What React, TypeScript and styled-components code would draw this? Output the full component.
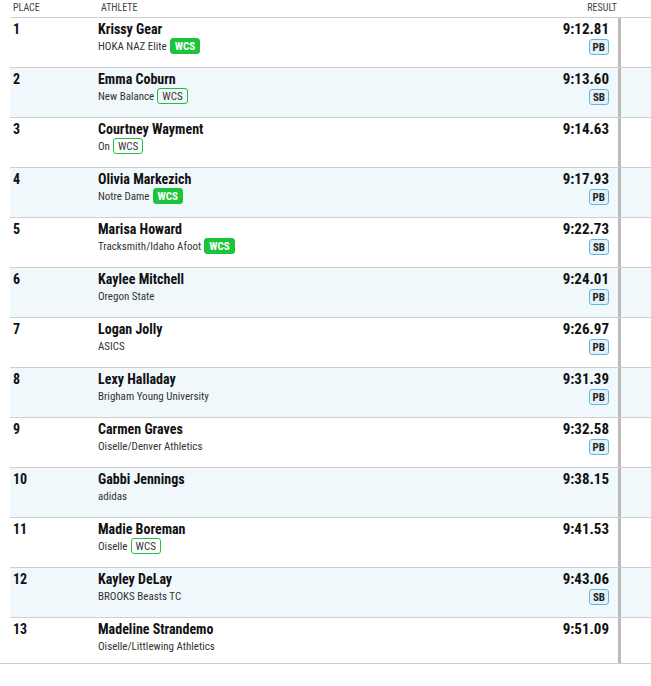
import React from 'react';
import styled, { createGlobalStyle } from 'styled-components';

const GlobalStyle = createGlobalStyle`
  html, body {
    margin: 0;
    padding: 0;
    background: #ffffff;
  }
  body {
    font-family: Roboto, "Noto Sans", sans-serif;
    font-stretch: 80%;
    color: #111;
  }
`;

type Mark = 'PB' | 'SB' | null;
type Wcs = 'solid' | 'outline' | null;

interface ResultRow {
  place: number;
  name: string;
  team: string;
  wcs: Wcs;
  time: string;
  mark: Mark;
}

const results: ResultRow[] = [
  { place: 1, name: 'Krissy Gear', team: 'HOKA NAZ Elite', wcs: 'solid', time: '9:12.81', mark: 'PB' },
  { place: 2, name: 'Emma Coburn', team: 'New Balance', wcs: 'outline', time: '9:13.60', mark: 'SB' },
  { place: 3, name: 'Courtney Wayment', team: 'On', wcs: 'outline', time: '9:14.63', mark: null },
  { place: 4, name: 'Olivia Markezich', team: 'Notre Dame', wcs: 'solid', time: '9:17.93', mark: 'PB' },
  { place: 5, name: 'Marisa Howard', team: 'Tracksmith/Idaho Afoot', wcs: 'solid', time: '9:22.73', mark: 'SB' },
  { place: 6, name: 'Kaylee Mitchell', team: 'Oregon State', wcs: null, time: '9:24.01', mark: 'PB' },
  { place: 7, name: 'Logan Jolly', team: 'ASICS', wcs: null, time: '9:26.97', mark: 'PB' },
  { place: 8, name: 'Lexy Halladay', team: 'Brigham Young University', wcs: null, time: '9:31.39', mark: 'PB' },
  { place: 9, name: 'Carmen Graves', team: 'Oiselle/Denver Athletics', wcs: null, time: '9:32.58', mark: 'PB' },
  { place: 10, name: 'Gabbi Jennings', team: 'adidas', wcs: null, time: '9:38.15', mark: null },
  { place: 11, name: 'Madie Boreman', team: 'Oiselle', wcs: 'outline', time: '9:41.53', mark: null },
  { place: 12, name: 'Kayley DeLay', team: 'BROOKS Beasts TC', wcs: null, time: '9:43.06', mark: 'SB' },
  { place: 13, name: 'Madeline Strandemo', team: 'Oiselle/Littlewing Athletics', wcs: null, time: '9:51.09', mark: null },
];

const Wrapper = styled.div`
  width: 651px;
  border-bottom: 1px solid #cfcfcf;
`;

const Table = styled.div`
  margin-left: 10px;
  display: flex;
  flex-direction: column;
`;

const HeaderRow = styled.div`
  display: grid;
  grid-template-columns: 88px 1fr 100px 33px;
  height: 17px;
  border-bottom: 1px solid #cfcfcf;
  font-size: 10px;
  line-height: 15px;
  color: #444;
  text-transform: uppercase;
`;

const HeaderCell = styled.div<{ $right?: boolean }>`
  padding-left: ${p => (p.$right ? '0' : '3px')};
  padding-right: ${p => (p.$right ? '1px' : '0')};
  text-align: ${p => (p.$right ? 'right' : 'left')};
`;

const Row = styled.div<{ $shaded: boolean }>`
  display: grid;
  grid-template-columns: 88px 1fr 100px 3px 30px;
  height: 49px;
  background: ${p => (p.$shaded ? '#f0f8fc' : '#ffffff')};
  border-bottom: 1px solid #cfcfcf;

  &:last-child {
    height: 45px;
    border-bottom: none;
  }
`;

const Place = styled.div`
  padding: 2px 0 0 3px;
  font-size: 14px;
  line-height: 18px;
  font-weight: 700;
`;

const Athlete = styled.div`
  padding-top: 2px;
  display: flex;
  flex-direction: column;
`;

const Name = styled.div`
  font-size: 14px;
  line-height: 18px;
  font-weight: 700;
  color: #111;
`;

const Team = styled.div`
  display: flex;
  align-items: center;
  gap: 3px;
  height: 16px;
  font-size: 11px;
  color: #333;
`;

const WcsBadge = styled.span<{ $solid: boolean }>`
  display: inline-flex;
  align-items: center;
  height: 14px;
  padding: 0 4px;
  border-radius: 3px;
  font-size: 11px;
  font-weight: ${p => (p.$solid ? 700 : 400)};
  color: ${p => (p.$solid ? '#ffffff' : '#333')};
  background: ${p => (p.$solid ? '#1cc43c' : 'transparent')};
  border: 1px solid #1cc43c;
`;

const Result = styled.div`
  padding: 2px 9px 0 0;
  display: flex;
  flex-direction: column;
  align-items: flex-end;
  gap: 1px;
`;

const Time = styled.div`
  font-size: 15px;
  line-height: 18px;
  font-weight: 700;
  color: #111;
`;

const MarkBadge = styled.span`
  display: inline-flex;
  align-items: center;
  justify-content: center;
  height: 14px;
  padding: 0 3px;
  border-radius: 3px;
  font-size: 11px;
  font-weight: 700;
  color: #222;
  background: #e2f2fa;
  border: 1px solid #63b6e0;
`;

const Divider = styled.div`
  background: #bbbbbb;
`;

const App: React.FC = () => {
  return (
    <Wrapper>
      <GlobalStyle />
      <Table>
        <HeaderRow>
          <HeaderCell>Place</HeaderCell>
          <HeaderCell>Athlete</HeaderCell>
          <HeaderCell $right>Result</HeaderCell>
          <div />
        </HeaderRow>
        {results.map((r, i) => (
          <Row key={r.place} $shaded={i % 2 === 1}>
            <Place>{r.place}</Place>
            <Athlete>
              <Name>{r.name}</Name>
              <Team>
                {r.team}
                {r.wcs && <WcsBadge $solid={r.wcs === 'solid'}>WCS</WcsBadge>}
              </Team>
            </Athlete>
            <Result>
              <Time>{r.time}</Time>
              {r.mark && <MarkBadge>{r.mark}</MarkBadge>}
            </Result>
            <Divider />
            <div />
          </Row>
        ))}
      </Table>
    </Wrapper>
  );
};

export default App;
